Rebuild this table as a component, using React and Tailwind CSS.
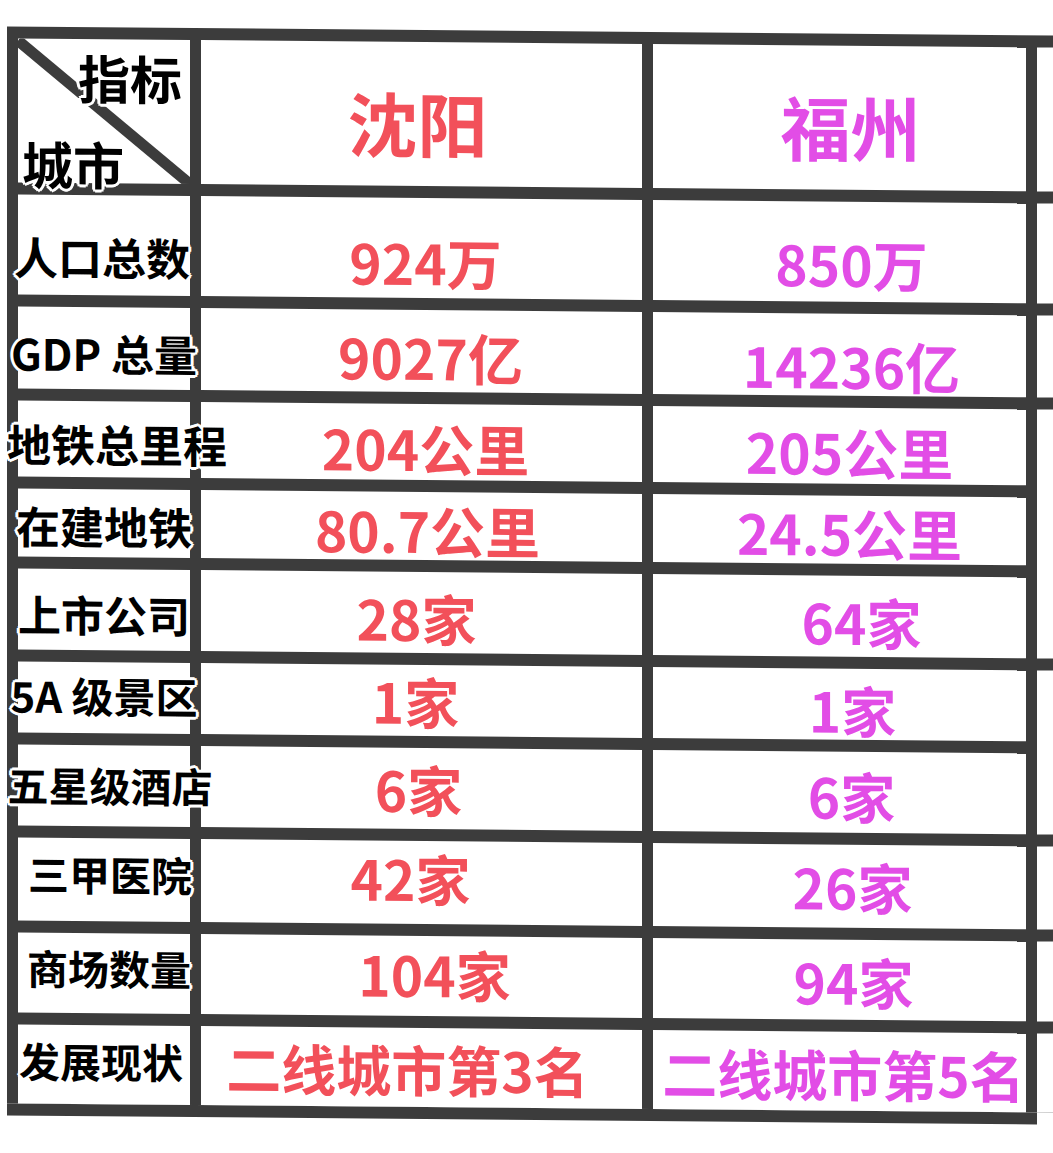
import React from "react";

const FONT = "font-['Noto_Sans_CJK_SC','Noto_Sans',sans-serif]";
const OUTLINE =
  "[text-shadow:3px_0_0_#fff,-3px_0_0_#fff,0_3px_0_#fff,0_-3px_0_#fff,2px_2px_0_#fff,-2px_-2px_0_#fff,2px_-2px_0_#fff,-2px_2px_0_#fff]";

const rows = [
  {
    label: "人口总数",
    lc: "text-[44px] pt-[22px] pr-[4px]",
    a: "924万",
    ac: "pt-[26px] pl-[8px]",
    b: "850万",
    bc: "pt-[22px] pl-[24px]",
    stub: "single",
  },
  {
    label: "GDP 总量",
    lc: "text-[43px] pt-[8px]",
    a: "9027亿",
    ac: "pt-[10px] pl-[18px]",
    b: "14236亿",
    bc: "pt-[20px] pl-[24px]",
    stub: "single",
  },
  {
    label: "地铁总里程",
    lc: "text-[44px] pt-[8px] pl-[26px]",
    a: "204公里",
    ac: "pt-[10px] pl-[8px]",
    b: "205公里",
    bc: "pt-[10px] pl-[20px]",
    stub: "span3",
  },
  {
    label: "在建地铁",
    lc: "text-[44px] pt-[4px]",
    a: "80.7公里",
    ac: "pt-[6px] pl-[12px]",
    b: "24.5公里",
    bc: "pt-[4px] pl-[20px]",
    stub: "none",
  },
  {
    label: "上市公司",
    lc: "text-[43px] pt-[8px]",
    a: "28家",
    ac: "pt-[10px] pr-[10px]",
    b: "64家",
    bc: "pt-[10px] pl-[44px]",
    stub: "none",
  },
  {
    label: "5A 级景区",
    lc: "text-[42px] pb-[6px]",
    a: "1家",
    ac: "pr-[12px]",
    b: "1家",
    bc: "pt-[10px] pl-[26px]",
    stub: "span2",
  },
  {
    label: "五星级酒店",
    lc: "text-[41px] pb-[2px] pl-[12px]",
    a: "6家",
    ac: "pr-[6px]",
    b: "6家",
    bc: "pt-[6px] pl-[24px]",
    stub: "none",
  },
  {
    label: "三甲医院",
    lc: "text-[41px] pb-[12px] pl-[12px]",
    a: "42家",
    ac: "pb-[10px] pr-[22px]",
    b: "26家",
    bc: "pt-[0px] pl-[26px]",
    stub: "single",
  },
  {
    label: "商场数量",
    lc: "text-[41px] pb-[12px] pl-[10px]",
    a: "104家",
    ac: "pb-[6px] pl-[26px]",
    b: "94家",
    bc: "pt-[2px] pl-[28px]",
    stub: "single",
  },
  {
    label: "发展现状",
    lc: "text-[41px] pb-[8px] pr-[6px]",
    a: "二线城市第3名",
    ac: "pt-[2px] pr-[28px]",
    b: "二线城市第5名",
    bc: "pt-[4px] pl-[8px]",
    stub: "single",
  },
];

function Stub({ kind }) {
  if (kind === "single") return <div className="bg-white" />;
  if (kind === "span3") return <div className="bg-white row-span-3" />;
  if (kind === "span2") return <div className="bg-white row-span-2" />;
  return null;
}

export default function App() {
  return (
    <div className={`w-[1053px] h-[1153px] overflow-hidden bg-white pt-[31px] ${FONT}`}>
      <div className="ml-[7px] w-[1050px] skew-y-[0.5deg]">
        <div className="grid bg-[#3c3c3c] pl-[11px] pt-[12px] gap-x-[11px] gap-y-[12px] grid-cols-[172px_441px_373px_20px] grid-rows-[144px_100px_82px_76px_68px_81px_71px_81px_83px_80px_79px]">
          {/* header */}
          <div className="relative bg-white">
            <svg
              className="absolute inset-0"
              width="172"
              height="144"
              viewBox="0 0 172 144"
            >
              <line x1="0" y1="2" x2="172" y2="144" stroke="#3c3c3c" strokeWidth="11" />
            </svg>
            <div className="relative z-10 flex h-full flex-col justify-between">
              <span
                className={`self-end pr-[8px] pt-[12px] text-[52px] font-bold leading-none text-black ${OUTLINE}`}
              >
                指标
              </span>
              <span
                className={`self-start pl-[4px] mb-[-6px] text-[51px] font-bold leading-none text-black ${OUTLINE}`}
              >
                城市
              </span>
            </div>
          </div>
          <div className="flex items-center justify-center bg-white pt-[16px] pr-[8px]">
            <span className="text-[70px] font-bold leading-none text-[#f2505a]">沈阳</span>
          </div>
          <div className="flex items-center justify-center bg-white pt-[16px] pl-[22px]">
            <span className="text-[70px] font-bold leading-none text-[#e24de6]">福州</span>
          </div>
          <div className="bg-white" />

          {rows.map((r) => (
            <React.Fragment key={r.label}>
              <div className={`flex items-center justify-center bg-white whitespace-nowrap ${r.lc}`}>
                <span
                  className={`relative z-10 font-bold leading-none text-black whitespace-pre ${OUTLINE}`}
                >
                  {r.label}
                </span>
              </div>
              <div className={`flex items-center justify-center bg-white whitespace-nowrap ${r.ac}`}>
                <span className="text-[55px] font-bold leading-none text-[#f2505a]">{r.a}</span>
              </div>
              <div className={`flex items-center justify-center bg-white whitespace-nowrap ${r.bc}`}>
                <span className="text-[55px] font-bold leading-none text-[#e24de6]">{r.b}</span>
              </div>
              <Stub kind={r.stub} />
            </React.Fragment>
          ))}
        </div>
        <div className="h-[12px] w-[1030px] bg-[#3c3c3c]" />
      </div>
    </div>
  );
}
